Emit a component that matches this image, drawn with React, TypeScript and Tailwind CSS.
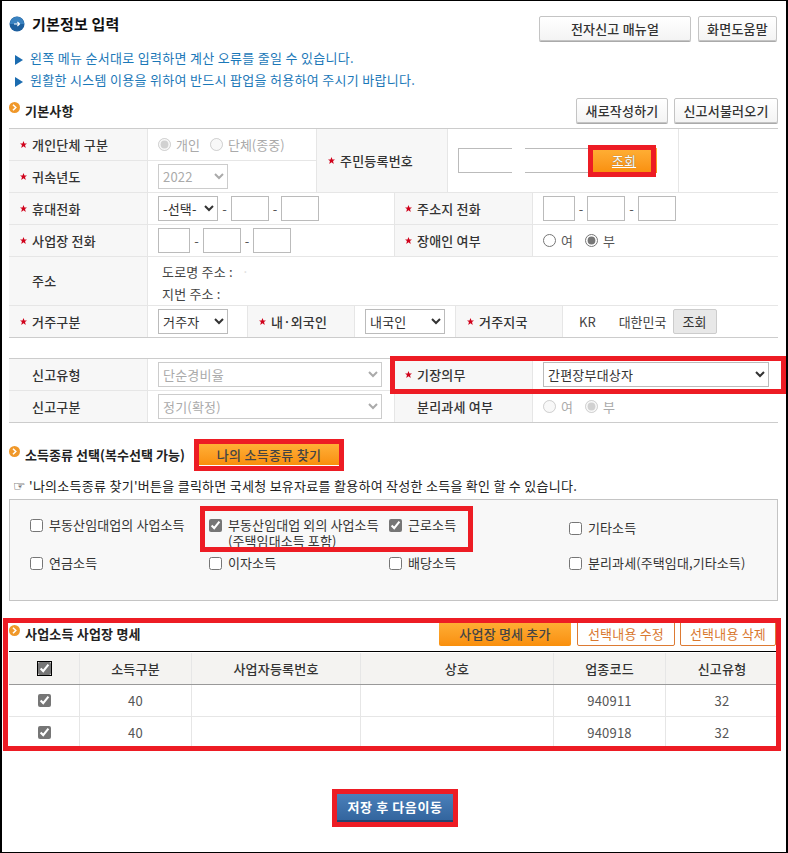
import type { ReactNode } from 'react'

const FONT = "font-['Noto_Sans_CJK_KR','Noto_Sans',sans-serif]"
const inputCls = 'h-[25px] border border-[#bbb] bg-white'
const selectCls = 'h-[25px] border border-[#bbb] bg-white text-[13px] text-[#333]'
const disabledSelectCls = 'h-[25px] border border-[#ccc] bg-white text-[13px] text-[#aaa] opacity-100'

function Star() {
	return (
		<svg width="7" height="7" viewBox="0 0 10 10" className="shrink-0">
			<polygon points="5,0 6.4,3.4 10,3.6 7.2,5.8 8.2,10 5,7.6 1.8,10 2.8,5.8 0,3.6 3.6,3.4" fill="#d0021b" />
		</svg>
	)
}

function BlueBullet() {
	return (
		<svg width="16" height="16" viewBox="0 0 16 16" className="shrink-0">
			<circle cx="8" cy="8" r="7.5" fill="#1d5f9e" />
			<path d="M0.8 8a7.2 7.2 0 0 1 14.4 0z" fill="#3a82c0" />
			<path d="M5 8h5.5M8.4 6 10.5 8 8.4 10" stroke="#fff" strokeWidth="1.1" fill="none" />
		</svg>
	)
}

function OrangeBullet() {
	return (
		<svg width="11" height="11" viewBox="0 0 11 11" className="shrink-0">
			<circle cx="5.5" cy="5.5" r="5.5" fill="#f0982a" />
			<path d="M4 2.8 6.8 5.5 4 8.2" stroke="#fff" strokeWidth="1.5" fill="none" />
		</svg>
	)
}

function Triangle() {
	return (
		<svg width="8" height="10" viewBox="0 0 8 10" className="mt-[3px] shrink-0">
			<polygon points="0,0 8,5 0,10" fill="#1b6cb0" />
		</svg>
	)
}

function Label({ w, req, pad, children }: { w: string; req?: boolean; pad?: string; children: ReactNode }) {
	return (
		<div className={`${w} ${pad ?? 'pl-[11px]'} flex shrink-0 items-center gap-[5px] self-stretch border-r border-[#e6e6e6] bg-[#f7f7f7] font-medium text-[#333]`}>
			{req ? <Star /> : <span className="w-[7px]" />}
			<span>{children}</span>
		</div>
	)
}

function Value({ w, className, children }: { w: string; className?: string; children?: ReactNode }) {
	return <div className={`${w} flex shrink-0 items-center self-stretch pl-[10px] ${className ?? ''}`}>{children}</div>
}

function Row({ h, last, children }: { h: string; last?: boolean; children: ReactNode }) {
	return <div className={`flex ${h} border-b ${last ? 'border-[#ccc]' : 'border-[#e6e6e6]'}`}>{children}</div>
}

function Dash({ w }: { w: string }) {
	return <span className={`${w} text-center text-[#555]`}>-</span>
}

function Radio({ label, checked, disabled }: { label: string; checked?: boolean; disabled?: boolean }) {
	return (
		<label className={`flex items-center gap-[5px] tracking-normal ${disabled ? 'text-[#aaa]' : 'text-[#555]'}`}>
			<input type="radio" readOnly checked={!!checked} disabled={disabled} className="m-0 size-[13px] accent-[#767676]" />
			{label}
		</label>
	)
}

function Check({ checked, label, className }: { checked?: boolean; label: ReactNode; className?: string }) {
	return (
		<label className={`flex items-start gap-[6px] tracking-[0.1px] text-[#333] ${className ?? ''}`}>
			<input type="checkbox" readOnly checked={!!checked} className="m-0 mt-[1px] size-[13px] shrink-0 accent-[#767676]" />
			<span className="-mt-[1px] leading-[16px]">{label}</span>
		</label>
	)
}

function GrayButton({ w, children }: { w: string; children: ReactNode }) {
	return (
		<button type="button" className={`${w} h-[25px] rounded-[2px] border border-[#c4c4c4] bg-gradient-to-b from-white to-[#f4f4f4] text-[13px] font-medium text-[#333] shadow-[0_1px_0_#aaa]`}>
			{children}
		</button>
	)
}

function Heading({ children }: { children: ReactNode }) {
	return (
		<div className="flex items-center gap-[5px] text-[13px] font-bold text-[#222]">
			<span className="-mt-[6px]">
				<OrangeBullet />
			</span>
			{children}
		</div>
	)
}

const overlays = [
	'left-[586px] top-[144px] h-[32px] w-[68px]',
	'left-[388px] top-[355px] h-[38px] w-[396px]',
	'left-[192px] top-[438px] h-[32px] w-[150px]',
	'left-[198px] top-[505px] h-[46px] w-[273px]',
	'left-[1px] top-[617px] h-[133px] w-[778px]',
	'left-[330px] top-[788px] h-[38px] w-[126px]',
]

const cols = ['w-[70px]', 'w-[112px]', 'w-[169px]', 'w-[193px]', 'w-[112px]', 'w-[113px]']

function TableRow({ values }: { values: ReactNode[] }) {
	return (
		<div className="flex h-[32px] border-b border-[#e6e6e6] text-[#555]">
			{values.map((v, i) => (
				<div key={i} className={`${cols[i]} flex items-center justify-center ${i > 0 ? 'border-l border-[#e6e6e6]' : ''}`}>
					{v}
				</div>
			))}
		</div>
	)
}

export default function App() {
	const headers = ['', '소득구분', '사업자등록번호', '상호', '업종코드', '신고유형']
	return (
		<div className={`${FONT} relative h-[853px] w-[788px] overflow-hidden border-y border-x-2 border-black bg-white pl-[7px] pr-[8px] text-[13px] tracking-[0.2px]`}>
			{/* 상단 타이틀 */}
			<div className="flex h-[41px] items-start justify-between pt-[15px]">
				<div className="flex items-center gap-[7px] text-[15px] font-bold leading-[16px] text-[#111]">
					<BlueBullet />
					기본정보 입력
				</div>
				<div className="mr-px flex gap-[7px]">
					<GrayButton w="w-[152px]">전자신고 매뉴얼</GrayButton>
					<GrayButton w="w-[79px]">화면도움말</GrayButton>
				</div>
			</div>

			<div className="mt-[5px] flex flex-col pl-[6px] tracking-[0.3px] text-[#1b78b8]">
				<div className="flex h-[22px] items-center gap-[7px]">
					<Triangle />왼쪽 메뉴 순서대로 입력하면 계산 오류를 줄일 수 있습니다.
				</div>
				<div className="flex h-[22px] items-center gap-[7px]">
					<Triangle />원활한 시스템 이용을 위하여 반드시 팝업을 허용하여 주시기 바랍니다.
				</div>
			</div>

			{/* 기본사항 */}
			<div className="mt-[7px] flex h-[25px] items-center justify-between">
				<Heading>기본사항</Heading>
				<div className="flex gap-[6px]">
					<GrayButton w="w-[92px]">새로작성하기</GrayButton>
					<GrayButton w="w-[104px]">신고서불러오기</GrayButton>
				</div>
			</div>

			<div className="mt-[5px] border-t border-[#ccc]">
				<div className="flex h-[64px] border-b border-[#e6e6e6]">
					<div className="flex w-[308px] shrink-0 flex-col border-r border-[#e6e6e6]">
						<div className="flex h-[32px] border-b border-[#e6e6e6]">
							<Label w="w-[139px]" req>개인단체 구분</Label>
							<Value w="flex-1" className="gap-[10px]">
								<Radio label="개인" checked disabled />
								<Radio label="단체(종중)" disabled />
							</Value>
						</div>
						<div className="flex flex-1">
							<Label w="w-[139px]" req>귀속년도</Label>
							<Value w="flex-1">
								<select disabled className={`${disabledSelectCls} w-[70px]`}>
									<option>2022</option>
								</select>
							</Value>
						</div>
					</div>
					<Label w="w-[131px]" req>주민등록번호</Label>
					<Value w="w-[231px]" className="border-r border-[#e6e6e6]">
						<input className={`${inputCls} w-[54px] border-r-0`} />
						<input className={`${inputCls} ml-[13px] w-[66px] border-l-0`} />
						<button type="button" className="h-[25px] w-[66px] bg-gradient-to-b from-[#ffb035] to-[#f98f0a] text-[13px] text-white underline [text-shadow:0_0_1px_#555]">
							조회
						</button>
					</Value>
				</div>
				<Row h="h-[32px]">
					<Label w="w-[139px]" req>휴대전화</Label>
					<Value w="w-[247px]" className="border-r border-[#e6e6e6]">
						<select className={`${selectCls} w-[60px]`}>
							<option>-선택-</option>
						</select>
						<Dash w="w-[13px]" />
						<input className={`${inputCls} w-[38px]`} />
						<Dash w="w-[12px]" />
						<input className={`${inputCls} w-[38px]`} />
					</Value>
					<Label w="w-[138px]" pad="pl-[10px]" req>주소지 전화</Label>
					<Value w="flex-1">
						<input className={`${inputCls} w-[32px]`} />
						<Dash w="w-[12px]" />
						<input className={`${inputCls} w-[38px]`} />
						<Dash w="w-[13px]" />
						<input className={`${inputCls} w-[38px]`} />
					</Value>
				</Row>
				<Row h="h-[32px]">
					<Label w="w-[139px]" req>사업장 전화</Label>
					<Value w="w-[247px]" className="border-r border-[#e6e6e6]">
						<input className={`${inputCls} w-[32px]`} />
						<Dash w="w-[13px]" />
						<input className={`${inputCls} w-[38px]`} />
						<Dash w="w-[12px]" />
						<input className={`${inputCls} w-[38px]`} />
					</Value>
					<Label w="w-[138px]" pad="pl-[10px]" req>장애인 여부</Label>
					<Value w="flex-1" className="gap-[12px]">
						<Radio label="여" />
						<Radio label="부" checked />
					</Value>
				</Row>
				<Row h="h-[49px]">
					<Label w="w-[139px]">주소</Label>
					<div className="flex flex-col justify-center gap-[5px] pl-[14px] pt-[2px] leading-[17px] text-[#444]">
						<span>
							도로명 주소 :<span className="ml-[9px] text-[#ddd]">·</span>
						</span>
						<span>지번 주소 :</span>
					</div>
				</Row>
				<Row h="h-[32px]" last>
					<Label w="w-[139px]" req>거주구분</Label>
					<Value w="w-[100px]" className="border-r border-[#e6e6e6]">
						<select className={`${selectCls} w-[70px]`}>
							<option>거주자</option>
						</select>
					</Value>
					<Label w="w-[107px]" req>
						내<span className="tracking-[-2px]">·</span>
						<span className="ml-[2px]">외국인</span>
					</Label>
					<Value w="w-[101px]" className="border-r border-[#e6e6e6]">
						<select className={`${selectCls} w-[80px]`}>
							<option>내국인</option>
						</select>
					</Value>
					<Label w="w-[107px]" req>거주지국</Label>
					<Value w="flex-1" className="pl-[16px] tracking-normal text-[#444]">
						<span>KR</span>
						<span className="ml-[23px]">대한민국</span>
						<button type="button" className="ml-[6px] h-[25px] w-[44px] rounded-[2px] border border-[#ccc] bg-[#e8e8e8] text-[#333]">
							조회
						</button>
					</Value>
				</Row>
			</div>

			{/* 신고유형 */}
			<div className="mt-[20px] border-t border-[#ccc]">
				<Row h="h-[32px]">
					<Label w="w-[139px]">신고유형</Label>
					<Value w="w-[247px]" className="border-r border-[#e6e6e6]">
						<select disabled className={`${disabledSelectCls} w-[224px]`}>
							<option>단순경비율</option>
						</select>
					</Value>
					<Label w="w-[138px]" pad="pl-[10px]" req>기장의무</Label>
					<Value w="flex-1">
						<select className={`${selectCls} w-[226px]`}>
							<option>간편장부대상자</option>
						</select>
					</Value>
				</Row>
				<Row h="h-[32px]" last>
					<Label w="w-[139px]">신고구분</Label>
					<Value w="w-[247px]" className="border-r border-[#e6e6e6]">
						<select disabled className={`${disabledSelectCls} w-[224px]`}>
							<option>정기(확정)</option>
						</select>
					</Value>
					<Label w="w-[138px]" pad="pl-[10px]">분리과세 여부</Label>
					<Value w="flex-1" className="gap-[12px]">
						<Radio label="여" disabled />
						<Radio label="부" checked disabled />
					</Value>
				</Row>
			</div>

			{/* 소득종류 선택 */}
			<div className="mt-[21px] flex h-[21px] items-center gap-[14px] tracking-[0.05px]">
				<Heading>소득종류 선택(복수선택 가능)</Heading>
				<button type="button" className="h-[21px] w-[140px] bg-gradient-to-b from-[#ffb035] to-[#f98f0a] text-[13px] font-medium tracking-[0.3px] text-[#444]">
					나의 소득종류 찾기
				</button>
			</div>
			<div className="mt-[13px] flex h-[16px] items-center gap-[4px] pl-[4px] tracking-[0.27px] text-[#222]">
				<span className="w-[12px] font-['DejaVu_Sans'] text-[14px] leading-[16px] text-black">☞</span>
				'나의소득종류 찾기'버튼을 클릭하면 국세청 보유자료를 활용하여 작성한 소득을 확인 할 수 있습니다.
			</div>
			<div className="mt-[5px] grid h-[102px] grid-cols-[179px_180px_180px_1fr] grid-rows-[38px_1fr] border border-[#c4c4c4] bg-[#f8f8f8] pl-[20px] pt-[18px]">
				<Check label="부동산임대업의 사업소득" />
				<Check checked label={<>부동산임대업 외의 사업소득<br />(주택임대소득 포함)</>} />
				<Check checked label="근로소득" />
				<Check label="기타소득" className="pt-[3px]" />
				<Check label="연금소득" />
				<Check label="이자소득" />
				<Check label="배당소득" />
				<Check label="분리과세(주택임대,기타소득)" />
			</div>

			{/* 사업소득 사업장 명세 */}
			<div className="mt-[20px] flex h-[25px] items-end justify-between">
				<div className="self-center">
					<Heading>사업소득 사업장 명세</Heading>
				</div>
				<div className="mr-[2px] flex gap-[5px]">
					<button type="button" className="mr-px h-[25px] w-[132px] rounded-[2px] bg-gradient-to-b from-[#ffb035] to-[#f98f0a] font-medium text-[#444]">
						사업장 명세 추가
					</button>
					<button type="button" className="h-[25px] w-[98px] rounded-[2px] border border-[#dd7a33] bg-white text-[#d9782f]">
						선택내용 수정
					</button>
					<button type="button" className="h-[25px] w-[96px] rounded-[2px] border border-[#dd7a33] bg-white text-[#d9782f]">
						선택내용 삭제
					</button>
				</div>
			</div>
			<div className="mt-[5px] border-t border-black pt-px">
				<div className="flex h-[32px] border-b border-[#999] bg-[#f4f3f1] font-medium text-[#333]">
					{headers.map((h, i) => (
						<div key={i} className={`${cols[i]} flex items-center justify-center ${i > 0 ? 'border-l border-[#e6e6e6]' : ''}`}>
							{i === 0 ? <input type="checkbox" readOnly checked className="m-0 size-[13px] accent-[#767676] outline-[1.5px] outline-black" /> : h}
						</div>
					))}
				</div>
				<TableRow values={[<input key="c" type="checkbox" readOnly checked className="m-0 size-[13px] accent-[#767676]" />, '40', '', '', '940911', '32']} />
				<TableRow values={[<input key="c" type="checkbox" readOnly checked className="m-0 size-[13px] accent-[#767676]" />, '40', '', '', '940918', '32']} />
			</div>

			<button type="button" className="ml-[328px] mt-[45px] h-[28px] w-[116px] border-b-2 border-[#24446f] bg-gradient-to-b from-[#4a80ba] to-[#33659e] text-[13px] font-bold tracking-[0.6px] text-white">
				저장 후 다음이동
			</button>

			{/* 안내용 빨간 강조 박스 */}
			{overlays.map((o) => (
				<div key={o} className={`pointer-events-none absolute border-[5px] border-[#ed1c24] ${o}`} />
			))}
		</div>
	)
}
